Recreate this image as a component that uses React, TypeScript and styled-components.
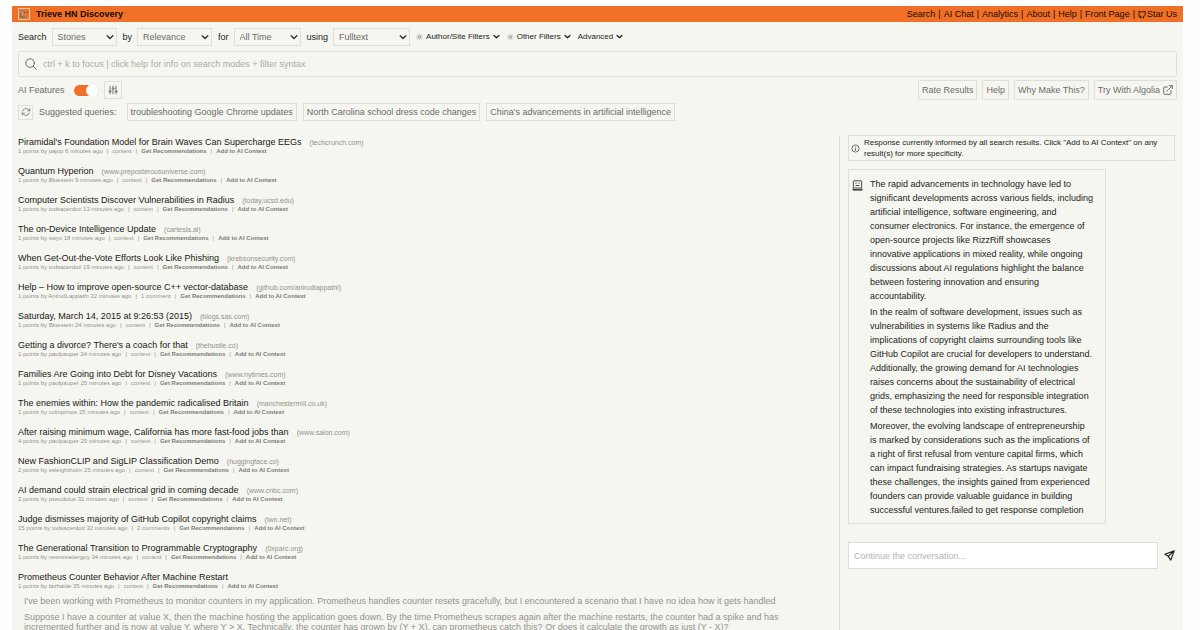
import React from "react";
import styled, { createGlobalStyle } from "styled-components";

const Global = createGlobalStyle`
  *, *::before, *::after { box-sizing: border-box; }
  html { height: 100%; overflow: hidden; }
  body { margin: 0; background: #fefefe; font-family: "Liberation Sans", Arial, sans-serif; color: #1c1c1c; }
  button, input, select, textarea { font-family: inherit; color: inherit; margin: 0; }
  a { color: inherit; text-decoration: none; }
  h1, h2, p, ul, ol { margin: 0; padding: 0; font-weight: inherit; font-size: inherit; }
  ul, ol { list-style: none; }
`;

const muted = "#6b6b68";
const faint = "#92928d";
const line = "#dedfd8";

const Page = styled.div`
  margin: 6px 17px 0 12px;
  min-height: calc(100vh - 6px);
  background: #f6f6f0;
`;

const TopBar = styled.header`
  display: flex;
  align-items: center;
  justify-content: space-between;
  height: 16px;
  padding: 0 6px;
  background: #f07028;
  font-size: 9px;
  line-height: 16px;
  color: #1a0c04;
`;

const Brand = styled.a`
  display: flex;
  align-items: center;
  gap: 6px;
  font-weight: bold;
  color: #140a04;
`;

const TopNav = styled.nav`
  display: flex;
  align-items: center;
  gap: 3px;
`;

const StarLink = styled.a`
  display: flex;
  align-items: center;
  gap: 1px;
`;

const Controls = styled.section`
  display: flex;
  flex-direction: column;
  padding: 0 6px;
  font-size: 9px;
`;

const FilterRow = styled.div`
  display: flex;
  align-items: center;
  gap: 6px;
  height: 29px;
`;

const Field = styled.label<{ $gap?: number }>`
  display: flex;
  align-items: center;
  gap: ${(p) => p.$gap ?? 5}px;
`;

const SelectWrap = styled.span<{ $w: number }>`
  display: grid;
  grid-template-columns: 1fr 10px;
  align-items: center;
  width: ${(p) => p.$w}px;
  height: 18px;
  border: 1px solid ${line};
  color: ${muted};
  svg { grid-area: 1 / 2; color: #333; pointer-events: none; }
`;

const Select = styled.select`
  grid-area: 1 / 1 / 2 / 3;
  height: 16px;
  padding: 0 0 0 5px;
  border: 0;
  background: transparent;
  appearance: none;
  font-size: 9px;
`;

const FilterButton = styled.button`
  display: flex;
  align-items: center;
  gap: 3px;
  padding: 0;
  border: 0;
  background: none;
  font-size: 8px;
`;

const Filters = styled.div`
  display: flex;
  gap: 7px;
`;

const SearchBox = styled.label`
  display: flex;
  align-items: center;
  gap: 6px;
  height: 26px;
  padding: 0 6px;
  border: 1px solid ${line};
  border-radius: 2px;
  color: ${muted};
`;

const SearchInput = styled.input`
  flex: 1;
  padding: 0;
  border: 0;
  outline: 0;
  background: transparent;
  font-size: 9px;
  &::placeholder { color: #aaaaa5; opacity: 1; }
`;

const ToolRow = styled.div`
  display: flex;
  align-items: center;
  justify-content: space-between;
  height: 26px;
  color: ${muted};
`;

const Group = styled.div`
  display: flex;
  align-items: center;
  gap: 5px;
`;

const Toggle = styled.input`
  appearance: none;
  display: flex;
  justify-content: flex-end;
  width: 25px;
  height: 11px;
  border-radius: 6px;
  background: #f07028;
  &::after {
    content: "";
    width: 13px;
    height: 13px;
    margin-top: -1px;
    border-radius: 50%;
    background: #fff;
  }
`;

const BoxButton = styled.button<{ $h?: number; $square?: boolean }>`
  display: flex;
  align-items: center;
  justify-content: center;
  gap: 3px;
  height: ${(p) => p.$h ?? 18}px;
  width: ${(p) => (p.$square ? `${p.$h ?? 18}px` : "auto")};
  padding: 0 ${(p) => (p.$square ? 0 : 3)}px;
  border: 1px solid ${line};
  background: none;
  font-size: 9px;
  color: ${muted};
`;

const SuggestRow = styled(Group)`
  gap: 6px;
  height: 18px;
  color: ${muted};
`;

const SuggestLabel = styled.span`
  padding-right: 4px;
`;

const Columns = styled.main`
  display: grid;
  grid-template-columns: minmax(0, 821fr) minmax(0, 336fr);
  margin-top: 14px;
  padding: 0 8px 0 6px;
`;

const Results = styled.ol`
  display: flex;
  flex-direction: column;
  gap: 10px;
  padding-top: 2px;
`;

const Result = styled.li``;

const TitleLine = styled.div`
  display: flex;
  align-items: baseline;
  gap: 8px;
  height: 10px;
  line-height: 10px;
`;

const Title = styled.a`
  font-size: 9px;
  color: #161616;
`;

const Domain = styled.a`
  font-size: 7px;
  color: ${faint};
`;

const Meta = styled.div`
  display: flex;
  gap: 4px;
  height: 9px;
  font-size: 6px;
  line-height: 9px;
  color: ${faint};
`;

const MetaButton = styled.button`
  padding: 0;
  border: 0;
  background: none;
  font-size: 6px;
  font-weight: bold;
  line-height: 9px;
  color: #7b7b77;
`;

const Excerpt = styled.div`
  display: flex;
  flex-direction: column;
  gap: 6px;
  margin-top: 5px;
  padding: 0 30px 0 6px;
  font-size: 9px;
  line-height: 10px;
  color: ${faint};
`;

const Chat = styled.aside`
  display: flex;
  flex-direction: column;
  align-items: flex-start;
  padding-left: 8px;
  border-left: 1px solid ${line};
`;

const Notice = styled.p`
  display: flex;
  align-items: center;
  gap: 4px;
  width: 100%;
  min-height: 26px;
  padding: 1px 2px;
  border: 1px solid ${line};
  font-size: 8px;
  line-height: 11px;
  svg { flex: none; }
`;

const Answer = styled.article`
  display: grid;
  grid-template-columns: 11px 1fr;
  gap: 7px;
  width: 79%;
  margin-top: 8px;
  padding: 7px 11px 6px 3px;
  border: 1px solid ${line};
  font-size: 9px;
  line-height: 14px;
  svg { margin-top: 3px; }
`;

const AnswerText = styled.div`
  display: flex;
  flex-direction: column;
  gap: 2px;
`;

const Composer = styled.form`
  display: flex;
  align-items: center;
  gap: 6px;
  width: 100%;
  margin-top: 18px;
`;

const Message = styled.input`
  flex: 1;
  height: 27px;
  padding: 0 5px;
  border: 1px solid ${line};
  background: #fff;
  font-size: 9px;
  &::placeholder { color: #b4b4b0; opacity: 1; }
`;

const Send = styled.button`
  display: flex;
  padding: 0;
  border: 0;
  background: none;
`;

const Chevron = ({ size = 8 }: { size?: number }) => (
  <svg width={size} height={size} viewBox="0 0 8 8" fill="none" stroke="currentColor" strokeWidth="1.4" strokeLinecap="round" strokeLinejoin="round" aria-hidden="true">
    <path d="M1.2 2.8 4 5.5 6.8 2.8" />
  </svg>
);

const Spark = () => (
  <svg width="7" height="8" viewBox="0 0 7 8" fill="none" aria-hidden="true">
    <circle cx="3.5" cy="4" r="3.4" fill="#e4e4de" />
    <circle cx="3.5" cy="4" r="1.3" stroke="#8b8b87" strokeWidth=".8" />
  </svg>
);

const Logo = () => (
  <svg width="12" height="12" viewBox="0 0 12 12" aria-hidden="true">
    <rect x=".5" y=".5" width="11" height="11" fill="#e8752f" stroke="#f6c9a4" />
    <path d="M2 9.7V6.2L3.2 3l1.6 1 .5 3 1.5 1.2v1.5z" fill="#86735a" />
    <path d="M3 4.2 4.5 5v3" stroke="#d5cbb9" strokeWidth=".8" fill="none" />
    <path d="M6 4.5h1.3M8.6 4.3h1.3" stroke="#5b2c12" strokeWidth=".9" />
  </svg>
);

const GithubMark = () => (
  <svg width="8" height="9" viewBox="0 0 8 9" fill="none" stroke="currentColor" strokeWidth=".9" strokeLinejoin="round" strokeLinecap="round" aria-hidden="true">
    <path d="M3 8V6.2H2.2C1.3 6.2 1 5.4 1 4.6V1.2l1.3.6h3.6l1.3-.6v3.4c0 .8-.4 1.6-1.3 1.6h-.5V8M2.9 7.4C1.8 7.6 1.6 7 .9 6.6" />
  </svg>
);

const SearchIcon = () => (
  <svg width="12" height="12" viewBox="0 0 12 12" fill="none" stroke="currentColor" strokeLinecap="round" aria-hidden="true">
    <circle cx="5.1" cy="5.1" r="4.3" />
    <path d="m8.3 8.3 3 3" />
  </svg>
);

const Sliders = () => (
  <svg width="10" height="10" viewBox="0 0 10 10" fill="none" stroke="#666" strokeWidth=".9" strokeLinecap="round" aria-hidden="true">
    <path d="M2 1.2v4M2 7.6v1.2M5 1.2v1.2M5 4.8v4M8 1.2v4M8 7.6v1.2" />
    <circle cx="2" cy="6.4" r=".9" />
    <circle cx="5" cy="3.5" r=".9" />
    <circle cx="8" cy="6.4" r=".9" />
  </svg>
);

const Refresh = () => (
  <svg width="10" height="10" viewBox="0 0 24 24" fill="none" stroke="currentColor" strokeWidth="1.9" strokeLinecap="round" strokeLinejoin="round" aria-hidden="true">
    <path d="M16 9.3h5v-5M3 19.6v-5h5M3 14.6l3.2 3.2a8.2 8.2 0 0 0 13.8-3.7M4 9.8A8.2 8.2 0 0 1 17.8 6.2L21 9.3" />
  </svg>
);

const External = () => (
  <svg width="10" height="10" viewBox="0 0 10 10" fill="none" stroke="currentColor" strokeLinecap="round" strokeLinejoin="round" aria-hidden="true">
    <path d="M4.4 2H1.6a.9.9 0 0 0-.9.9v5.5c0 .5.4.9.9.9h5.5c.5 0 .9-.4.9-.9V5.6M6.3.7h3v3M9.2.8 3.8 6.2" />
  </svg>
);

const Info = () => (
  <svg width="9" height="9" viewBox="0 0 9 9" fill="none" stroke="#555" strokeWidth=".8" aria-hidden="true">
    <circle cx="4.5" cy="4.5" r="3.6" />
    <path d="M3.9 4.2h.6v2.1M4.5 2.4v.8M3.8 6.3h1.4" />
  </svg>
);

const Robot = () => (
  <svg width="11" height="11" viewBox="0 0 11 11" fill="none" stroke="#333" strokeWidth=".9" aria-hidden="true">
    <rect x="1.4" y=".8" width="8.2" height="7.2" rx=".5" />
    <path d="M3.4 3.2h1.2M6.4 3.2h1.2M3.6 5.5h3.8M1 8.2v1.9h9V8.2" />
    <path d="M1 9.6h9" />
  </svg>
);

const Plane = () => (
  <svg width="11" height="11" viewBox="0 0 11 11" fill="none" stroke="#222" strokeWidth="1.2" strokeLinejoin="round" aria-hidden="true">
    <path d="M10.2.9.9 4.3l3.4 2 2.5 3.8zM10 1.1 4.3 6.3" />
  </svg>
);

const navLinks = ["Search", "AI Chat", "Analytics", "About", "Help", "Front Page"];

const selects = [
  { label: "Search", value: "Stories", width: 65 },
  { label: "by", value: "Relevance", width: 75 },
  { label: "for", value: "All Time", width: 67 },
  { label: "using", value: "Fulltext", width: 77 },
];

const queries = [
  "troubleshooting Google Chrome updates",
  "North Carolina school dress code changes",
  "China's advancements in artificial intelligence",
];

type Story = [title: string, domain: string, byline: string, comments: string, excerpt?: string[]];

const stories: Story[] = [
  ["Piramidal's Foundation Model for Brain Waves Can Supercharge EEGs", "techcrunch.com", "1 points by pajop 6 minutes ago", "context"],
  ["Quantum Hyperion", "www.preposterousuniverse.com", "1 points by Bluestein 9 minutes ago", "context"],
  ["Computer Scientists Discover Vulnerabilities in Radius", "today.ucsd.edu", "1 points by todsacerdoti 13 minutes ago", "context"],
  ["The on-Device Intelligence Update", "cartesia.ai", "1 points by swyx 18 minutes ago", "context"],
  ["When Get-Out-the-Vote Efforts Look Like Phishing", "krebsonsecurity.com", "1 points by todsacerdoti 19 minutes ago", "context"],
  ["Help – How to improve open-source C++ vector-database", "github.com/anirudlappathi", "1 points by AnirudLappathi 22 minutes ago", "1 comment"],
  ["Saturday, March 14, 2015 at 9:26:53 (2015)", "blogs.sas.com", "1 points by Bluestein 24 minutes ago", "context"],
  ["Getting a divorce? There's a coach for that", "thehustle.co", "1 points by paulpauper 24 minutes ago", "context"],
  ["Families Are Going into Debt for Disney Vacations", "www.nytimes.com", "1 points by paulpauper 25 minutes ago", "context"],
  ["The enemies within: How the pandemic radicalised Britain", "manchestermill.co.uk", "1 points by colinprince 25 minutes ago", "context"],
  ["After raising minimum wage, California has more fast-food jobs than", "www.salon.com", "4 points by paulpauper 25 minutes ago", "context"],
  ["New FashionCLIP and SigLIP Classification Demo", "huggingface.co", "2 points by esleightholm 25 minutes ago", "context"],
  ["AI demand could strain electrical grid in coming decade", "www.cnbc.com", "2 points by pseudolus 31 minutes ago", "context"],
  ["Judge dismisses majority of GitHub Copilot copyright claims", "lwn.net", "15 points by todsacerdoti 32 minutes ago", "2 comments"],
  ["The Generational Transition to Programmable Cryptography", "0xparc.org", "1 points by newsreaderguy 34 minutes ago", "context"],
  [
    "Prometheus Counter Behavior After Machine Restart", "", "1 points by fazhalde 35 minutes ago", "context",
    [
      "I've been working with Prometheus to monitor counters in my application. Prometheus handles counter resets gracefully, but I encountered a scenario that I have no idea how it gets handled",
      "Suppose I have a counter at value X, then the machine hosting the application goes down. By the time Prometheus scrapes again after the machine restarts, the counter had a spike and has incremented further and is now at value Y, where Y > X. Technically, the counter has grown by (Y + X), can prometheus catch this? Or does it calculate the growth as just (Y - X)?",
    ],
  ],
];

const answer = [
  "The rapid advancements in technology have led to significant developments across various fields, including artificial intelligence, software engineering, and consumer electronics. For instance, the emergence of open-source projects like RizzRiff showcases innovative\u00a0applications in mixed reality, while ongoing discussions about AI regulations highlight the balance between fostering innovation and ensuring accountability.",
  "In the realm of software development, issues such as vulnerabilities in systems like Radius and the implications of copyright claims surrounding tools like GitHub Copilot are crucial for developers to understand. Additionally, the growing demand for AI technologies raises concerns about the sustainability of electrical grids, emphasizing the need for responsible integration of these technologies into existing infrastructures.",
  "Moreover, the evolving landscape of entrepreneurship is\u00a0marked by considerations such as the implications of a\u00a0right of first refusal from venture capital firms, which can impact fundraising strategies. As startups navigate these challenges, the insights gained from experienced founders can provide valuable guidance in building successful ventures.failed to get response completion",
];

export default function App() {
  return (
    <>
      <Global />
      <Page>
        <TopBar>
          <Brand href="#"><Logo />Trieve HN Discovery</Brand>
          <TopNav>
            {navLinks.map((name) => (
              <React.Fragment key={name}><a href="#">{name}</a><span>|</span></React.Fragment>
            ))}
            <StarLink href="#"><GithubMark />Star Us</StarLink>
          </TopNav>
        </TopBar>
        <Controls>
          <FilterRow>
            {selects.map((s) => (
              <Field key={s.label}>
                {s.label}
                <SelectWrap $w={s.width}>
                  <Select defaultValue={s.value}><option>{s.value}</option></Select>
                  <Chevron />
                </SelectWrap>
              </Field>
            ))}
            <Filters>
              <FilterButton><Spark />Author/Site Filters<Chevron size={7} /></FilterButton>
              <FilterButton><Spark />Other Filters<Chevron size={7} /></FilterButton>
              <FilterButton>Advanced<Chevron size={7} /></FilterButton>
            </Filters>
          </FilterRow>
          <SearchBox>
            <SearchIcon />
            <SearchInput aria-label="Search stories" placeholder="ctrl + k to focus | click help for info on search modes + filter syntax" />
          </SearchBox>
          <ToolRow>
            <Group>
              <Field $gap={9}>AI Features<Toggle type="checkbox" role="switch" defaultChecked /></Field>
              <BoxButton $square aria-label="AI settings"><Sliders /></BoxButton>
            </Group>
            <Group>
              <BoxButton $h={20}>Rate Results</BoxButton>
              <BoxButton $h={20}>Help</BoxButton>
              <BoxButton $h={20}>Why Make This?</BoxButton>
              <BoxButton $h={20}>Try With Algolia<External /></BoxButton>
            </Group>
          </ToolRow>
          <SuggestRow>
            <BoxButton $square $h={15} aria-label="Refresh suggestions"><Refresh /></BoxButton>
            <SuggestLabel>Suggested queries:</SuggestLabel>
            {queries.map((q) => <BoxButton key={q}>{q}</BoxButton>)}
          </SuggestRow>
        </Controls>
        <Columns>
          <Results>
            {stories.map(([title, domain, byline, comments, excerpt]) => (
              <Result key={title}>
                <TitleLine>
                  <Title href="#">{title}</Title>
                  {domain && <Domain href="#">({domain})</Domain>}
                </TitleLine>
                <Meta>
                  <span>{byline}</span><span>|</span><a href="#">{comments}</a><span>|</span>
                  <MetaButton>Get Recommendations</MetaButton><span>|</span>
                  <MetaButton>Add to AI Context</MetaButton>
                </Meta>
                {excerpt && <Excerpt>{excerpt.map((p) => <p key={p}>{p}</p>)}</Excerpt>}
              </Result>
            ))}
          </Results>
          <Chat>
            <Notice><Info /><span>Response currently informed by all search results. Click "Add to AI Context" on any result(s) for more specificity.</span></Notice>
            <Answer>
              <Robot />
              <AnswerText>{answer.map((p) => <p key={p}>{p}</p>)}</AnswerText>
            </Answer>
            <Composer>
              <Message aria-label="Message" placeholder="Continue the conversation..." />
              <Send type="button" aria-label="Send"><Plane /></Send>
            </Composer>
          </Chat>
        </Columns>
      </Page>
    </>
  );
}
